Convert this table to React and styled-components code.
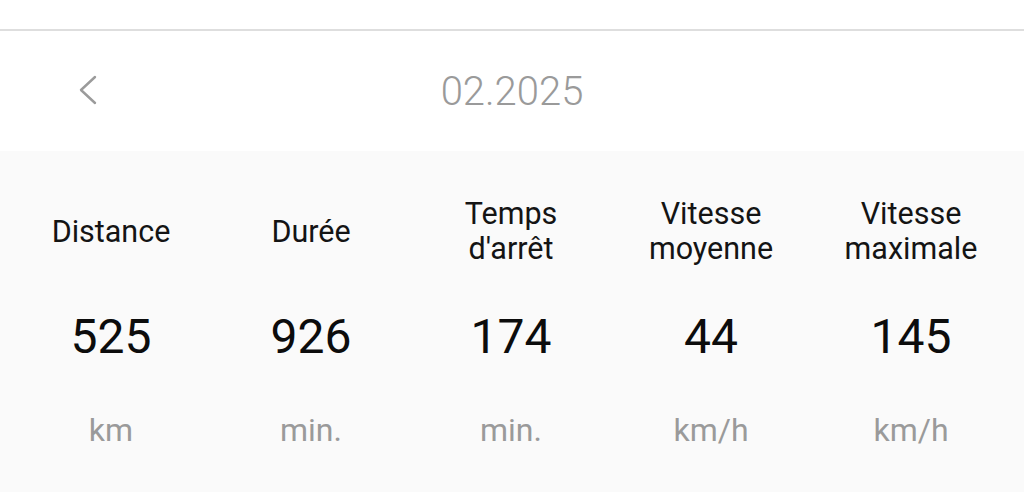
import React from 'react';
import styled, { createGlobalStyle } from 'styled-components';

const GlobalStyle = createGlobalStyle`
  html, body {
    margin: 0;
    padding: 0;
    background: #ffffff;
    font-family: Roboto, "Noto Sans", sans-serif;
  }
`;

const stats = [
  { label: ['Distance'], value: '525', unit: 'km' },
  { label: ['Durée'], value: '926', unit: 'min.' },
  { label: ['Temps', "d'arrêt"], value: '174', unit: 'min.' },
  { label: ['Vitesse', 'moyenne'], value: '44', unit: 'km/h' },
  { label: ['Vitesse', 'maximale'], value: '145', unit: 'km/h' },
];

function App() {
  return (
    <Page>
      <GlobalStyle />
      <TopBar />
      <Header>
        <BackButton aria-label="Mois précédent">
          <svg width="20" height="30" viewBox="0 0 20 30" fill="none">
            <path d="M16 2 L2 15 L16 28" stroke="#9b9b9b" strokeWidth="2.4" strokeLinecap="round" strokeLinejoin="round" />
          </svg>
        </BackButton>
        <Month>02.2025</Month>
      </Header>
      <Panel>
        {stats.map((s) => (
          <Stat key={s.label.join(' ') + s.unit}>
            <Label>
              {s.label.map((line) => (
                <span key={line}>{line}</span>
              ))}
            </Label>
            <Value>{s.value}</Value>
            <Unit>{s.unit}</Unit>
          </Stat>
        ))}
      </Panel>
    </Page>
  );
}

const Page = styled.div`
  width: 1024px;
  height: 497px;
  overflow: hidden;
  background: #ffffff;
`;

const TopBar = styled.div`
  height: 29px;
  border-bottom: 2px solid #dedede;
`;

const Header = styled.div`
  position: relative;
  height: 120px;
  display: flex;
  align-items: center;
  justify-content: center;
`;

const BackButton = styled.div`
  position: absolute;
  left: 79px;
  top: 44px;
  width: 20px;
  height: 30px;
  display: flex;
`;

const Month = styled.div`
  font-size: 40px;
  font-weight: 300;
  color: #9a9a9a;
  line-height: 1;
  padding-top: 1px;
`;

const Panel = styled.div`
  background: #fafafa;
  height: 341px;
  box-sizing: border-box;
  padding: 45px 13px 0 11px;
  display: grid;
  grid-template-columns: repeat(5, 200px);
  align-items: start;
`;

const Stat = styled.div`
  display: flex;
  flex-direction: column;
  align-items: center;
  text-align: center;
`;

const Label = styled.div`
  height: 70px;
  display: flex;
  flex-direction: column;
  justify-content: center;
  font-size: 30.5px;
  line-height: 35px;
  color: #141414;
`;

const Value = styled.div`
  margin-top: 43px;
  font-size: 48px;
  line-height: 56px;
  color: #0c0c0c;
`;

const Unit = styled.div`
  margin-top: 45px;
  font-size: 32px;
  line-height: 40px;
  color: #9a9a9a;
`;

export default App;
